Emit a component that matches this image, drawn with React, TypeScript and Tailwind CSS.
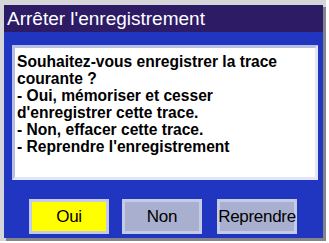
export default function App() {
  const font = { fontFamily: '"Liberation Sans", Arial, sans-serif' };
  return (
    <div className="w-[329px] h-[243px] bg-white relative overflow-hidden" style={font}>
      <div className="absolute left-0 top-0 w-[326px] h-[241px] bg-[#d6d6da]" />
      <div className="absolute left-[6px] top-[7px] w-[320px] h-[234px] bg-[#85858c]" />
      <div className="relative ml-[4px] pt-[5px] w-[319px]">
        <div className="h-[233px] flex flex-col bg-[#2035c0]">
          <div className="h-[27px] bg-[#2e1b66] text-white text-[19px] leading-[27px] pl-[3px] shrink-0">
            Arrêter l'enregistrement
          </div>
          <div className="ml-[8px] mt-[13px] w-[306px] h-[135px] bg-white border-[3px] border-[#b7bfe4] border-b-[#e2e6f6] border-r-[#e2e6f6] px-[2px] pt-[5px] text-[15.6px] leading-[17px] font-bold text-black whitespace-nowrap">
            <div>Souhaitez-vous enregistrer la trace</div>
            <div>courante ?</div>
            <div>- Oui, mémoriser et cesser</div>
            <div>d'enregistrer cette trace.</div>
            <div>- Non, effacer cette trace.</div>
            <div>- Reprendre l'enregistrement</div>
          </div>
          <div className="flex mt-[19px] pl-[25px]">
            <div className="w-[80px] h-[35px] bg-[#ffff00] border-[3px] border-[#c4cbe8] flex items-center justify-center text-[17px] text-black tracking-[-0.3px]">Oui</div>
            <div className="ml-[13px] w-[80px] h-[35px] bg-[#a9b0cf] border-[3px] border-[#c4cbe8] flex items-center justify-center text-[17px] text-black tracking-[-0.3px]">Non</div>
            <div className="ml-[15px] w-[80px] h-[35px] bg-[#a9b0cf] border-[3px] border-[#c4cbe8] flex items-center justify-center text-[17px] text-black tracking-[-0.3px] whitespace-nowrap">Reprendre</div>
          </div>
        </div>
      </div>
    </div>
  );
}
